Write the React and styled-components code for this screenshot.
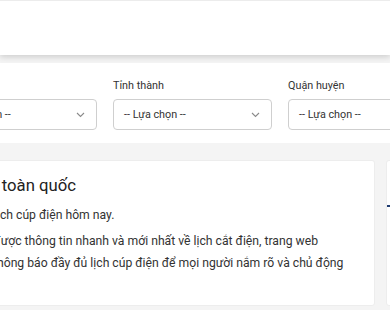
import React from 'react'
import styled, { createGlobalStyle } from 'styled-components'

const GlobalStyle = createGlobalStyle`
  html, body {
    margin: 0;
    padding: 0;
    background: #f4f4f4;
    font-family: Roboto, "Noto Sans", Arial, sans-serif;
    color: #333;
    overflow: hidden;
  }
`

const filters = [
  { label: 'Khu vực' },
  { label: 'Tỉnh thành' },
  { label: 'Quận huyện' },
  { label: 'Phường xã' },
]

const Chevron = () => (
  <svg width="9" height="6" viewBox="0 0 9 6">
    <polyline points="1,1 4.5,4.5 8,1" fill="none" stroke="#8a8a8a" strokeWidth="1.1" />
  </svg>
)

const App = () => {
  return (
    <>
      <GlobalStyle />
      <Header />
      <FilterBar>
        <FilterGrid>
          {filters.map((f) => (
            <Field key={f.label}>
              <Label>{f.label}</Label>
              <Select>
                <span>-- Lựa chọn --</span>
                <Chevron />
              </Select>
            </Field>
          ))}
        </FilterGrid>
      </FilterBar>
      <Content>
        <Card>
          <Title>Lịch cúp điện toàn quốc</Title>
          <Lead>Tra cứu thông tin lịch cúp điện hôm nay.</Lead>
          <Text>
            Để giúp bạn nắm được thông tin nhanh và mới nhất về lịch cắt điện, trang web
            <br />
            lichcupdien.io.vn thông báo đầy đủ lịch cúp điện để mọi người nắm rõ và chủ động
          </Text>
        </Card>
        <Sidebar>
          <Accent />
        </Sidebar>
      </Content>
    </>
  )
}

export default App

const Header = styled.header`
  position: relative;
  z-index: 1;
  height: 54px;
  background: #fff;
  border-top: 1px solid #ececec;
  box-shadow: 0 2px 6px rgba(0, 0, 0, 0.16);
`

const FilterBar = styled.section`
  margin-top: 8px;
  background: #fff;
  padding: 16px 0 13px;
`

const FilterGrid = styled.div`
  display: grid;
  grid-template-columns: repeat(4, 159px);
  column-gap: 16px;
  margin-left: -62px;
`

const Field = styled.div`
  display: flex;
  flex-direction: column;
`

const Label = styled.div`
  font-size: 10.8px;
  line-height: 14px;
  color: #333;
  margin-bottom: 6px;
`

const Select = styled.div`
  box-sizing: border-box;
  height: 31px;
  border: 1px solid #cfcfcf;
  border-radius: 4px;
  padding: 0 11px 0 10px;
  display: flex;
  align-items: center;
  justify-content: space-between;
  font-size: 10.8px;
  color: #333;
  background: #fff;
`

const Content = styled.div`
  display: flex;
  gap: 11px;
  margin-top: 17px;
  margin-left: -118px;
`

const Card = styled.article`
  box-sizing: border-box;
  flex: 0 0 493px;
  height: 146px;
  background: #fff;
  border: 1px solid #ededed;
  border-radius: 3px;
  padding: 13px 16px 0 16px;
`

const Title = styled.h1`
  margin: 0;
  font-size: 16.7px;
  line-height: 24px;
  font-weight: 400;
  color: #222;
`

const Lead = styled.p`
  margin: 6px 0 0;
  font-size: 12.2px;
  line-height: 22px;
  color: #333;
`

const Text = styled.p`
  margin: 4px 0 0;
  font-size: 12.2px;
  line-height: 22px;
  color: #333;
  white-space: nowrap;
`

const Sidebar = styled.aside`
  flex: 0 0 300px;
  height: 146px;
  background: #fff;
  border: 1px solid #ededed;
  border-radius: 3px;
  padding-top: 44px;
  box-sizing: border-box;
`

const Accent = styled.div`
  width: 14px;
  height: 2px;
  background: #1f3c70;
`
